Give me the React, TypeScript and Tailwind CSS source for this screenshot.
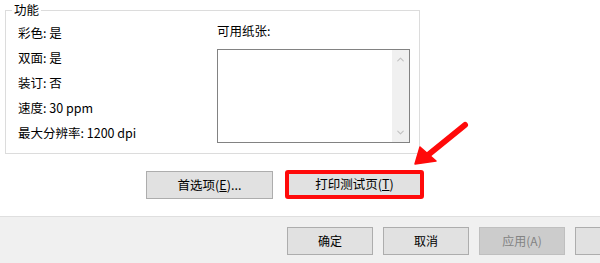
import { ChevronUp, ChevronDown } from 'lucide-react';

const FEATURES = ['彩色: 是', '双面: 是', '装订: 否', '速度: 30 ppm', '最大分辨率: 1200 dpi'];

function DlgButton({ label, disabled }: { label: string; disabled?: boolean }) {
  return (
    <button
      className={`w-[86px] h-[28px] shrink-0 border text-[12px] ${
        disabled ? 'bg-[#cccccc] border-[#bfbfbf] text-[#838383]' : 'bg-[#e1e1e1] border-[#adadad] text-black'
      }`}
    >
      {label}
    </button>
  );
}

export default function App() {
  return (
    <div
      className="relative w-[600px] h-[263px] bg-white overflow-hidden text-black"
      style={{ fontFamily: '"Microsoft YaHei", "Noto Sans CJK SC", sans-serif' }}
    >
      <div className="h-[216px] pt-[10px] pl-[5px]">
        {/* group box */}
        <div className="relative w-[415px] h-[144px] border border-[#dcdcdc] flex">
          <span className="absolute -top-[9px] left-[6px] bg-white px-[2px] text-[12.5px] leading-[16px]">功能</span>
          <div className="w-[211px] pl-[12px] pt-[9px] flex flex-col">
            {FEATURES.map(f => (
              <div key={f} className="h-[25px] leading-[25px] text-[12.5px]">{f}</div>
            ))}
          </div>
          <div className="pt-[12px] flex flex-col">
            <div className="text-[12.5px] leading-[16px] h-[26px]">可用纸张:</div>
            <div className="w-[193px] h-[94px] border border-[#828282] flex justify-end">
              <div className="w-[17px] h-full bg-[#f0f0f0] flex flex-col justify-between items-center py-[4px]">
                <ChevronUp className="w-[11px] h-[11px] text-[#c2c2c2]" strokeWidth={2.5} />
                <ChevronDown className="w-[11px] h-[11px] text-[#c2c2c2]" strokeWidth={2.5} />
              </div>
            </div>
          </div>
        </div>

        {/* action buttons */}
        <div className="flex items-start mt-[16px] pl-[141px]">
          <button className="w-[127px] h-[28px] mt-[1px] bg-[#e1e1e1] border border-[#adadad] text-[12.5px]">
            首选项(<span className="underline">E</span>)...
          </button>
          <button className="ml-[12px] w-[139px] h-[29px] bg-[#e1e1e1] border-4 border-[#ff0a0a] rounded-[3px] text-[12.5px]">
            打印测试页(<span className="underline">T</span>)
          </button>
        </div>
      </div>

      {/* footer */}
      <div className="h-[47px] bg-[#f0f0f0] border-t border-[#dfdfdf] flex gap-[10px] pl-[287px] pt-[10px]">
        <DlgButton label="确定" />
        <DlgButton label="取消" />
        <DlgButton label="应用(A)" disabled />
        <DlgButton label="" />
      </div>

      {/* red arrow annotation */}
      <svg className="absolute left-0 top-0 pointer-events-none" width="600" height="263">
        <line x1="465" y1="125" x2="428" y2="155" stroke="#ff0a0a" strokeWidth="6" strokeLinecap="round" />
        <polygon points="415,164 420,147 436,161" fill="#ff0a0a" stroke="#ff0a0a" strokeWidth="1.5" strokeLinejoin="round" />
      </svg>
    </div>
  );
}
